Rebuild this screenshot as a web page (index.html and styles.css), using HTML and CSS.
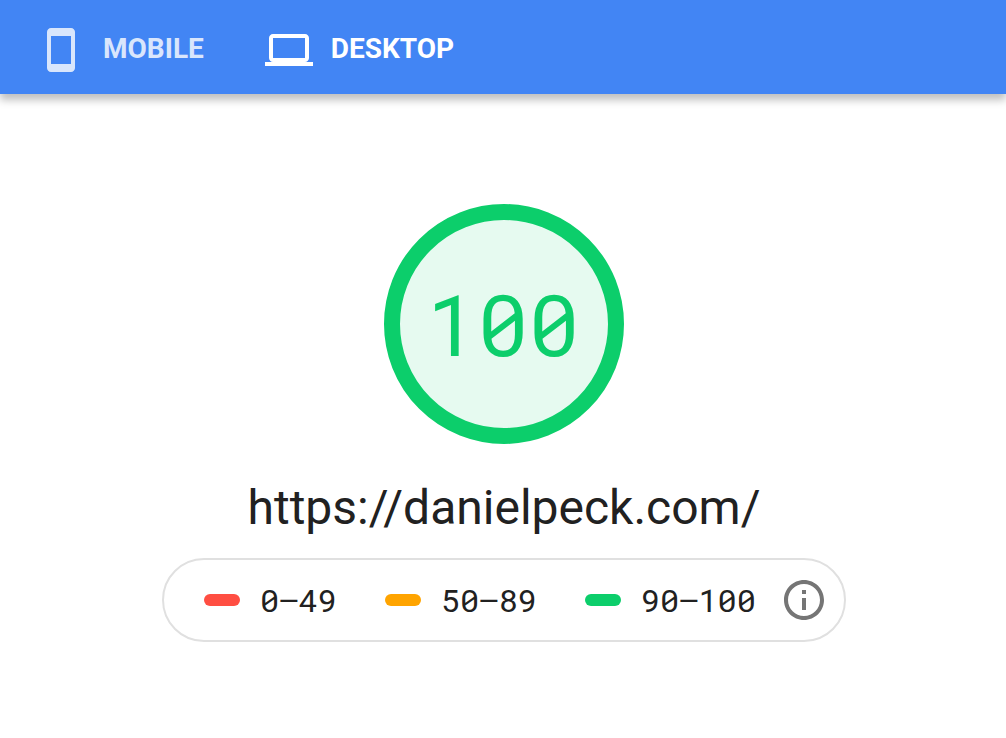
FILE: index.html
```html
<!DOCTYPE html>
<html lang="en">
<head>
    <meta charset="UTF-8">
    <meta name="viewport" content="width=device-width, initial-scale=1.0">
    <title>PageSpeed Insights</title>
    <link rel="stylesheet" href="styles.css">
</head>
<body>
    <header class="tabs" role="tablist">
        <button class="tab" role="tab" aria-selected="false">
            <svg class="icon" viewBox="0 0 24 24"><path d="M17 1H7c-1.1 0-2 .9-2 2v18c0 1.1.9 2 2 2h10c1.1 0 2-.9 2-2V3c0-1.1-.9-2-2-2zM17 19H7V5h10v14z"/></svg>
            <span>MOBILE</span>
        </button>
        <button class="tab active" role="tab" aria-selected="true">
            <svg class="icon" viewBox="0 0 24 24"><path d="M20 18c1.1 0 2-.9 2-2V6c0-1.1-.9-2-2-2H4c-1.1 0-2 .9-2 2v10c0 1.1.9 2 2 2H0v2h24v-2h-4zM4 6h16v10H4V6z"/></svg>
            <span>DESKTOP</span>
        </button>
    </header>

    <main class="report">
        <div class="gauge">100</div>
        <h1 class="url">https://danielpeck.com/</h1>
        <div class="scale">
            <span class="range fail">0–49</span>
            <span class="range average">50–89</span>
            <span class="range pass">90–100</span>
            <button class="info" aria-label="About the score">
                <svg class="icon" viewBox="0 0 24 24"><path d="M11 17h2v-6h-2v6zm1-15C6.48 2 2 6.48 2 12s4.48 10 10 10 10-4.48 10-10S17.52 2 12 2zm0 18c-4.41 0-8-3.59-8-8s3.59-8 8-8 8 3.59 8 8-3.59 8-8 8zM11 9h2V7h-2v2z"/></svg>
            </button>
        </div>
    </main>
</body>
</html>
```
FILE: styles.css
```css
body {
    margin: 0;
    font-family: Roboto, sans-serif;
    background-color: #fff;
    color: #212121;
}
button {
    padding: 0;
    border: none;
    background: none;
    cursor: pointer;
}
.icon {
    display: block;
    flex: none;
    width: 48px;
    height: 48px;
    fill: currentColor;
}
.tabs {
    display: flex;
    gap: 61px;
    padding: 26px 37px 20px;
    background-color: #4285f4;
    box-shadow: 0 6px 8px rgba(0, 0, 0, 0.25);
}
.tab {
    display: flex;
    gap: 18px;
    font: 700 28px/46px Roboto, sans-serif;
    color: #fff;
    opacity: 0.8;
}
.tab.active {
    opacity: 1;
}
.report {
    display: flex;
    flex-direction: column;
    align-items: center;
    padding: 110px 0 96px 2px;
}
.gauge {
    display: flex;
    align-items: center;
    justify-content: center;
    box-sizing: border-box;
    width: 240px;
    height: 240px;
    padding: 0 2px 2px 0;
    border: 16px solid #0cce6b;
    border-radius: 50%;
    background-color: #e6faf0;
    color: #0cce6b;
    font-family: "Roboto Mono", monospace;
    font-size: 85px;
}
.url {
    margin: 32px 0 18px;
    font-size: 48px;
    font-weight: 400;
    line-height: 64px;
}
.scale {
    display: flex;
    align-items: center;
    padding: 16px 16px 16px 40px;
    border: 2px solid #e0e0e0;
    border-radius: 42px;
    font-family: "Roboto Mono", monospace;
    font-size: 32px;
    line-height: 48px;
}
.range {
    display: flex;
    align-items: center;
    gap: 20px;
    margin-right: 48px;
}
.range::before {
    content: "";
    width: 36px;
    height: 12px;
    border-radius: 6px;
    background-color: #ff4e42;
}
.range.average::before {
    background-color: #ffa400;
}
.range.pass::before {
    background-color: #0cce6b;
}
.range.pass {
    margin-right: 24px;
}
.info {
    color: #757575;
}
```
